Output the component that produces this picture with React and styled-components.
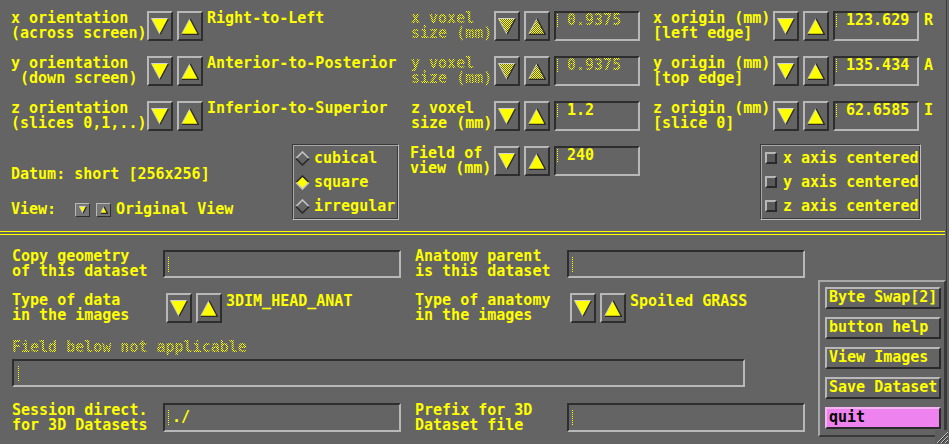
import React from "react";
import styled, { createGlobalStyle, css } from "styled-components";

const YEL = "#ffff00";
const BG = "#646464";
const LIGHT = "#b8b8b8";
const DARK = "#2e2e2e";

const GlobalStyle = createGlobalStyle`
  html, body { margin: 0; padding: 0; background: ${BG}; }
  body {
    font-family: "DejaVu Sans Mono", "Liberation Mono", monospace;
    font-weight: bold;
    font-size: 15px;
    line-height: 15px;
    color: ${YEL};
  }
`;

// insensitive widgets in Motif are drawn with a 50% stipple
const stipple = css`
  color: transparent;
  background-image: repeating-conic-gradient(${YEL} 0% 25%, transparent 0% 50%);
  background-size: 2px 2px;
  background-position: 0 0;
  -webkit-background-clip: text;
  background-clip: text;
`;

const Window = styled.div`
  position: relative;
  display: flex;
  width: 949px;
  height: 444px;
  overflow: hidden;
  background: ${BG};
`;

const Content = styled.div`
  width: 946px;
  flex: none;
`;

const Edge = styled.div`
  flex: 1;
  border-left: 1px solid #3a3a3a;
`;

const Top = styled.div`
  padding: 11px 0 0 11px;
  display: flex;
  flex-direction: column;
`;

const Row = styled.div`
  display: flex;
  align-items: ${p => (p.$start ? "flex-start" : "center")};
  height: ${p => p.$h || 30}px;
  margin-top: ${p => p.$mt || 0}px;
`;

const Group = styled.div`
  display: flex;
  align-items: center;
  height: ${p => (p.$h ? `${p.$h}px` : "100%")};
  width: ${p => (p.$w ? `${p.$w}px` : "auto")};
  margin-left: ${p => p.$ml || 0}px;
  margin-top: ${p => p.$mt || 0}px;
  flex: none;
`;

const Label = styled.div`
  white-space: pre;
  width: ${p => p.$w}px;
  flex: none;
  ${p => p.$dim && stipple}
`;

const Value = styled.div`
  white-space: pre;
  align-self: flex-start;
  margin-top: ${p => p.$mt || 0}px;
`;

const Arrows = styled.div`
  display: flex;
  gap: ${p => p.$gap || 4}px;
  margin-right: ${p => p.$mr ?? 4}px;
  flex: none;
`;

const ArrowBtn = styled.div`
  box-sizing: border-box;
  width: ${p => p.$w || 26}px;
  height: ${p => p.$h || 30}px;
  border: ${p => p.$bw || 2}px solid;
  border-color: ${LIGHT} ${DARK} ${DARK} ${LIGHT};
  background: ${p => p.$bg || "transparent"};
  display: flex;
  align-items: center;
  justify-content: center;
`;

const FieldBox = styled.div`
  box-sizing: border-box;
  width: ${p => p.$w}px;
  height: ${p => p.$h}px;
  flex: none;
  border: 2px solid;
  border-color: ${DARK} ${LIGHT} ${LIGHT} ${DARK};
  display: flex;
  align-items: ${p => (p.$top ? "flex-start" : "center")};
  padding-left: ${p => p.$pl}px;
`;

const Caret = styled.span`
  display: inline-block;
  flex: none;
  width: 0;
  height: ${p => p.$h}px;
  margin-top: ${p => p.$mt || 0}px;
  border-left: 1px dotted ${YEL};
`;

const FieldText = styled.span`
  white-space: pre;
  margin-left: ${p => p.$gap}px;
  ${p => p.$dim && stipple}
`;

const Axis = styled.div`
  margin-left: 5px;
  align-self: flex-start;
  margin-top: 2px;
`;

const InfoCol = styled.div`
  width: 281px;
  flex: none;
  padding-top: 23px;
  display: flex;
  flex-direction: column;
`;

const ViewRow = styled.div`
  display: flex;
  align-items: center;
  margin-top: 20px;
  height: 15px;
`;

const ViewLabel = styled.span`
  width: 64px;
  flex: none;
`;

const EtchedBox = styled.div`
  box-sizing: border-box;
  width: ${p => p.$w}px;
  height: 76px;
  flex: none;
  margin-left: ${p => p.$ml || 0}px;
  border: 1px solid;
  border-color: #3a3a3a #c0c0c0 #c0c0c0 #3a3a3a;
  box-shadow: inset 1px 1px 0 #a8a8a8, inset -1px -1px 0 #3a3a3a;
  padding: 1px 0 0 ${p => p.$pl}px;
  display: flex;
  flex-direction: column;
`;

const Choice = styled.div`
  display: flex;
  align-items: center;
  height: 24px;
  gap: ${p => p.$gap}px;
  white-space: pre;
`;

const Check = styled.span`
  box-sizing: border-box;
  width: 12px;
  height: 12px;
  flex: none;
  border: 2px solid;
  border-color: ${LIGHT} #2a2a2a #2a2a2a ${LIGHT};
  background: #5a5a5a;
`;

const Separator = styled.div`
  box-sizing: border-box;
  width: 945px;
  height: 4px;
  margin-top: 11px;
  border-top: 1px solid ${YEL};
  border-bottom: 1px solid ${YEL};
`;

const Bottom = styled.div`
  display: flex;
`;

const BottomLeft = styled.div`
  box-sizing: border-box;
  width: 818px;
  flex: none;
  padding-left: 12px;
  display: flex;
  flex-direction: column;
`;

const Note = styled.div`
  margin-top: 17px;
  white-space: pre;
  ${stipple}
`;

const Panel = styled.div`
  box-sizing: border-box;
  width: 128px;
  height: 157px;
  margin-top: 45px;
  border: 2px solid;
  border-color: #a8a8a8 #3a3a3a #3a3a3a #a8a8a8;
  padding: 5px 0 0 5px;
  display: flex;
  flex-direction: column;
  gap: 8px;
`;

const PushBtn = styled.div`
  box-sizing: border-box;
  width: 116px;
  height: 22px;
  border: 2px solid;
  border-color: ${p => (p.$quit ? "#f4b4f4" : LIGHT)} #2a2a2a #2a2a2a ${p => (p.$quit ? "#f4b4f4" : LIGHT)};
  padding: 1px 0 0 2px;
  white-space: pre;
  background: ${p => (p.$quit ? "#ee82ee" : "transparent")};
  color: ${p => (p.$quit ? "#000" : YEL)};
`;

const Grip = styled.svg`
  position: absolute;
  right: 0;
  bottom: 0;
`;

const Tri = ({ up, dim, small, id }) => {
  const w = small ? 8 : 18;
  const h = small ? 8 : 17;
  const pid = `stip-${id}`;
  const fill = dim ? `url(#${pid})` : YEL;
  const pts = up
    ? `${w / 2},0.5 0.5,${h - 0.5} ${w - 0.5},${h - 0.5}`
    : `0.5,0.5 ${w - 0.5},0.5 ${w / 2},${h - 0.5}`;
  return (
    <svg width={w} height={h} viewBox={`0 0 ${w} ${h}`}>
      {dim && (
        <defs>
          <pattern id={pid} x="0" y="0" width="2" height="2" patternUnits="userSpaceOnUse">
            <rect width="2" height="2" fill={BG} />
            <rect width="1" height="1" fill={YEL} />
            <rect x="1" y="1" width="1" height="1" fill={YEL} />
          </pattern>
        </defs>
      )}
      <polygon points={pts} fill={fill} />
      {up ? (
        <>
          <polyline points={`0.5,${h - 0.5} ${w / 2},0.5`} stroke="#d0d0d0" fill="none" />
          <polyline points={`${w / 2},0.5 ${w - 0.5},${h - 0.5} 0.5,${h - 0.5}`} stroke="#2a2a2a" strokeWidth="1.4" fill="none" />
        </>
      ) : (
        <>
          <polyline points={`${w / 2},${h - 0.5} 0.5,0.5 ${w - 0.5},0.5`} stroke="#d0d0d0" fill="none" />
          <polyline points={`${w - 0.5},0.5 ${w / 2},${h - 0.5}`} stroke="#2a2a2a" strokeWidth="1.4" fill="none" />
        </>
      )}
    </svg>
  );
};

const ArrowPair = ({ dim, mr, id = "a" }) => (
  <Arrows $mr={mr}>
    <ArrowBtn><Tri dim={dim} id={`${id}-dn`} /></ArrowBtn>
    <ArrowBtn><Tri up dim={dim} id={`${id}-up`} /></ArrowBtn>
  </Arrows>
);

const Diamond = ({ on }) => (
  <svg width="15" height="15" viewBox="0 0 15 15">
    <polygon points="7.5,1 14,7.5 7.5,14 1,7.5" fill={on ? YEL : BG} />
    <polyline points="1,7.5 7.5,1 14,7.5" stroke={on ? "#2a2a2a" : "#c4c4c4"} strokeWidth="1.6" fill="none" />
    <polyline points="14,7.5 7.5,14 1,7.5" stroke={on ? "#c4c4c4" : "#2a2a2a"} strokeWidth="1.6" fill="none" />
  </svg>
);

const TopField = ({ value, dim }) => (
  <FieldBox $w={86} $h={30} $top $pl={1}>
    <Caret $h={13} $mt={1} />
    <FieldText $gap={9} $dim={dim}>{value}</FieldText>
  </FieldBox>
);

const TextField = ({ w, h = 28, value = "", pl = 3 }) => (
  <FieldBox $w={w} $h={h} $pl={pl}>
    <Caret $h={15} />
    <FieldText $gap={3}>{value}</FieldText>
  </FieldBox>
);

const orient = [
  { a: "x orientation\n(across screen)", v: "Right-to-Left", b: "x voxel\nsize (mm)", s: "0.9375", dim: true, c: "x origin (mm)\n[left edge]", o: "123.629", l: "R" },
  { a: "y orientation\n (down screen)", v: "Anterior-to-Posterior", b: "y voxel\nsize (mm)", s: "0.9375", dim: true, c: "y origin (mm)\n[top edge]", o: "135.434", l: "A" },
  { a: "z orientation\n(slices 0,1,..)", v: "Inferior-to-Superior", b: "z voxel\nsize (mm)", s: "1.2", dim: false, c: "z origin (mm)\n[slice 0]", o: "62.6585", l: "I" },
];

const App = () => (
  <Window>
    <GlobalStyle />
    <Content>
      <Top>
        {orient.map((r, i) => (
          <Row key={r.l} $mt={i ? 15 : 0}>
            <Group $w={400}>
              <Label $w={136}>{r.a}</Label>
              <ArrowPair />
              <Value>{r.v}</Value>
            </Group>
            <Group $w={242}>
              <Label $w={83} $dim={r.dim}>{r.b}</Label>
              <ArrowPair dim={r.dim} id={`vox${i}`} />
              <TopField value={r.s} dim={r.dim} />
            </Group>
            <Group>
              <Label $w={120}>{r.c}</Label>
              <ArrowPair />
              <TopField value={r.o} />
              <Axis>{r.l}</Axis>
            </Group>
          </Row>
        ))}

        <Row $h={76} $mt={13} $start>
          <InfoCol>
            <div>Datum: short [256x256]</div>
            <ViewRow>
              <ViewLabel>View:</ViewLabel>
              <Arrows $gap={6} $mr={5}>
                <ArrowBtn $w={15} $h={14} $bw={1} $bg="#767676"><Tri small /></ArrowBtn>
                <ArrowBtn $w={15} $h={14} $bw={1} $bg="#767676"><Tri small up /></ArrowBtn>
              </Arrows>
              <span>Original View</span>
            </ViewRow>
          </InfoCol>
          <EtchedBox $w={107} $pl={2}>
            <Choice $gap={4}><Diamond />cubical</Choice>
            <Choice $gap={4}><Diamond on />square</Choice>
            <Choice $gap={4}><Diamond />irregular</Choice>
          </EtchedBox>
          <Group $ml={11} $mt={2} $h={30}>
            <Label $w={84}>{"Field of\nview (mm)"}</Label>
            <ArrowPair />
            <TopField value="240" />
          </Group>
          <EtchedBox $w={161} $ml={120} $pl={4}>
            <Choice $gap={6}><Check />x axis centered</Choice>
            <Choice $gap={6}><Check />y axis centered</Choice>
            <Choice $gap={6}><Check />z axis centered</Choice>
          </EtchedBox>
        </Row>
      </Top>

      <Separator />

      <Bottom>
        <BottomLeft>
          <Row $h={28} $mt={15}>
            <Group $w={403}>
              <Label $w={151}>{"Copy geometry\nof this dataset"}</Label>
              <TextField w={238} />
            </Group>
            <Group>
              <Label $w={152}>{"Anatomy parent\nis this dataset"}</Label>
              <TextField w={238} />
            </Group>
          </Row>
          <Row $mt={15}>
            <Group $w={403}>
              <Label $w={154}>{"Type of data\nin the images"}</Label>
              <ArrowPair />
              <Value $mt={1}>3DIM_HEAD_ANAT</Value>
            </Group>
            <Group>
              <Label $w={155}>{"Type of anatomy\nin the images"}</Label>
              <ArrowPair />
              <Value $mt={1}>Spoiled GRASS</Value>
            </Group>
          </Row>
          <Note>Field below not applicable</Note>
          <Row $h={28} $mt={4}>
            <TextField w={733} pl={4} />
          </Row>
          <Row $h={29} $mt={16}>
            <Group $w={403}>
              <Label $w={151}>{"Session direct.\nfor 3D Datasets"}</Label>
              <TextField w={238} h={29} value="./" />
            </Group>
            <Group>
              <Label $w={152}>{"Prefix for 3D\nDataset file"}</Label>
              <TextField w={238} h={29} />
            </Group>
          </Row>
        </BottomLeft>
        <Panel>
          <PushBtn>Byte Swap[2]</PushBtn>
          <PushBtn>button help</PushBtn>
          <PushBtn>View Images</PushBtn>
          <PushBtn>Save Dataset</PushBtn>
          <PushBtn $quit>quit</PushBtn>
        </Panel>
      </Bottom>
    </Content>
    <Edge />
    <Grip width="14" height="14" viewBox="0 0 14 14">
      <rect width="14" height="14" fill="#5e5e5e" />
      <path d="M13 2 L2 13 M13 6 L6 13 M13 10 L10 13" stroke="#c8c8c8" strokeWidth="1" />
      <path d="M13 3 L3 13 M13 7 L7 13 M13 11 L11 13" stroke="#333" strokeWidth="1" />
    </Grip>
  </Window>
);

export default App;
